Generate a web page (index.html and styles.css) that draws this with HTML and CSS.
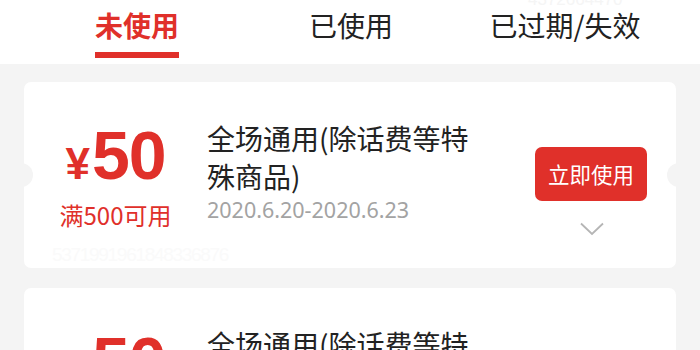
FILE: index.html
```html
<!DOCTYPE html>
<html lang="zh-CN">

<head>
    <meta charset="UTF-8">
    <meta name="viewport" content="width=device-width, initial-scale=1.0">
    <title>我的优惠券</title>
    <link rel="stylesheet" href="styles.css">
</head>

<body>
    <nav class="tabs">
        <span class="ghost">4372664470</span>
        <div class="tab-cell"><a class="tab active">未使用</a></div>
        <div class="tab-cell"><a class="tab">已使用</a></div>
        <div class="tab-cell"><a class="tab">已过期/失效</a></div>
    </nav>

    <main class="list">
        <div class="coupon">
            <div class="coupon-main">
                <div class="value">
                    <div class="amount"><span class="yen">¥</span>50</div>
                    <div class="limit">满500可用</div>
                </div>
                <div class="info">
                    <div class="title">全场通用(除话费等特殊商品)</div>
                    <div class="date">2020.6.20-2020.6.23</div>
                </div>
                <div class="action">
                    <button class="use">立即使用</button>
                    <svg class="more" width="24" height="14" viewBox="0 0 24 14">
                        <polyline points="1,1.5 12,12 23,1.5" fill="none" stroke="#b5b5b5" stroke-width="1.8" />
                    </svg>
                </div>
            </div>
            <div class="code">5371991961848336876</div>
        </div>

        <div class="coupon">
            <div class="coupon-main">
                <div class="value">
                    <div class="amount"><span class="yen">¥</span>50</div>
                    <div class="limit">满500可用</div>
                </div>
                <div class="info">
                    <div class="title">全场通用(除话费等特殊商品)</div>
                    <div class="date">2020.6.20-2020.6.23</div>
                </div>
                <div class="action">
                    <button class="use">立即使用</button>
                </div>
            </div>
        </div>
    </main>
</body>

</html>
```

FILE: styles.css
```css
body {
    margin: 0;
    background-color: #f4f4f4;
    font-family: "Noto Sans CJK SC", "Noto Sans", sans-serif;
    color: #222;
    overflow: hidden;
}

.tabs {
    position: relative;
    height: 64px;
    background-color: white;
    display: grid;
    grid-template-columns: repeat(3, 1fr);
    padding: 0 28px 0 30px;
}

.tab-cell {
    text-align: center;
}

.ghost {
    position: absolute;
    left: 528px;
    top: -10px;
    font-family: "Liberation Sans", sans-serif;
    font-size: 17px;
    color: #f5f5f5;
}

.tab {
    display: inline-block;
    font-size: 28px;
    line-height: 50px;
    color: #222;
    position: relative;
}

.tab.active {
    color: #e0302a;
    font-weight: bold;
}

.tab.active::after {
    content: "";
    position: absolute;
    left: 0;
    right: 0;
    bottom: -8px;
    height: 6px;
    background-color: #e0302a;
}

.list {
    padding: 18px 24px 0 24px;
    display: flex;
    flex-direction: column;
    gap: 20px;
}

.coupon {
    position: relative;
    background-color: white;
    border-radius: 7px;
    height: 186px;
}

.coupon::before,
.coupon::after {
    content: "";
    position: absolute;
    top: 81px;
    width: 24px;
    height: 24px;
    border-radius: 50%;
    background-color: #f4f4f4;
}

.coupon::before {
    left: -15px;
}

.coupon::after {
    right: -15px;
}

.coupon-main {
    display: flex;
    align-items: center;
    padding-top: 31px;
}

.value {
    width: 183px;
    margin-top: 6px;
    text-align: center;
    color: #e0302a;
}

.amount {
    font-family: "Liberation Sans", Arial, sans-serif;
    font-weight: bold;
    font-size: 68px;
    line-height: 72px;
    letter-spacing: -1px;
}

.yen {
    font-size: 44px;
    margin-right: 3px;
}

.limit {
    font-size: 24px;
    line-height: 30px;
}

.info {
    flex: 1;
}

.title {
    width: 270px;
    font-size: 28px;
    line-height: 38px;
}

.date {
    font-family: "Noto Sans", sans-serif;
    font-size: 21.5px;
    line-height: 30px;
    color: #a3a3a3;
}

.action {
    width: 141px;
    margin-top: 4px;
    display: flex;
    flex-direction: column;
    align-items: flex-start;
    position: relative;
}

.use {
    width: 112px;
    height: 54px;
    border: none;
    border-radius: 7px;
    background-color: #e0302a;
    color: white;
    font-family: "Noto Sans CJK SC", sans-serif;
    font-size: 21.5px;
    padding: 0;
}

.more {
    position: absolute;
    left: 45px;
    top: 75px;
}

.code {
    font-family: "Liberation Sans Narrow", "Liberation Sans", sans-serif;
    font-size: 19px;
    color: #fafafa;
    padding: 14px 0 0 28px;
    letter-spacing: -1.3px;
}
```
